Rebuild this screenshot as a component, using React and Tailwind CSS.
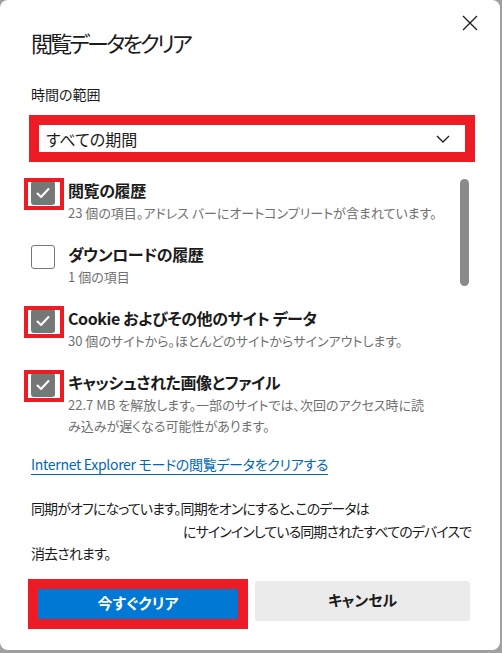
import React, { useState } from "react";

const items = [
  {
    label: "閲覧の履歴",
    sub: ["23 個の項目。アドレス バーにオートコンプリートが含まれています。"],
    checked: true,
  },
  { label: "ダウンロードの履歴", sub: ["1 個の項目"], checked: false },
  {
    label: "Cookie およびその他のサイト データ",
    sub: ["30 個のサイトから。ほとんどのサイトからサインアウトします。"],
    checked: true,
  },
  {
    label: "キャッシュされた画像とファイル",
    sub: [
      "22.7 MB を解放します。一部のサイトでは、次回のアクセス時に読",
      "み込みが遅くなる可能性があります。",
    ],
    checked: true,
  },
];

const CheckBox = ({ checked, marked }) => (
  <div className="relative mt-[3px] h-6 w-6 shrink-0">
    {checked ? (
      <div className="flex h-6 w-6 items-center justify-center rounded-[3px] bg-[#777777]">
        <svg width="16" height="16" viewBox="0 0 16 16" fill="none">
          <path d="M2.5 8.5l3.5 3.5 7.5-8" stroke="white" strokeWidth="2" strokeLinecap="round" strokeLinejoin="round" />
        </svg>
      </div>
    ) : (
      <div className="h-6 w-6 rounded-[3px] border border-[#777777] bg-white" />
    )}
    {/* red annotation frame */}
    {marked && (
      <div className="absolute -left-[7px] -top-[3px] h-[32px] w-[40px] border-4 border-[#ed1c24]" />
    )}
  </div>
);

export default function App() {
  const [rows] = useState(items);

  return (
    <div
      className="h-[653px] w-[502px] bg-[#a0a0a0] [font-feature-settings:'palt']"
      style={{ fontFamily: '"Noto Sans CJK JP", "Noto Sans", sans-serif' }}
    >
      <div className="flex h-[650px] w-[500px] flex-col rounded-lg bg-white pl-[31px] text-[#1b1b1b]">
        {/* Header */}
        <div className="flex items-start justify-between">
          <h1 className="mt-[27px] text-[22px] leading-[30px] font-normal tracking-[-2.8px]">閲覧データをクリア</h1>
          <button className="mr-[22px] mt-[15px]">
            <svg width="16" height="16" viewBox="0 0 16 16">
              <path d="M1 1l14 14M15 1L1 15" stroke="#1b1b1b" strokeWidth="1.3" />
            </svg>
          </button>
        </div>

        {/* Time range */}
        <div className="mt-[27px] text-[14px] leading-[20px]">時間の範囲</div>
        <div className="-ml-[2px] mt-[11px] w-[446px] border-[10px] border-[#ed1c24]">
          <div className="flex h-[27px] items-center justify-between bg-white pl-[7px] pr-[15px]">
            <span className="text-[16px] leading-[22px]">すべての期間</span>
            <svg width="14" height="8" viewBox="0 0 14 8" fill="none">
              <path d="M1 1l6 6 6-6" stroke="#1b1b1b" strokeWidth="1.3" />
            </svg>
          </div>
        </div>

        {/* Checklist */}
        <div className="relative mt-[16px] flex flex-col gap-[19px]">
          {rows.map((row, i) => (
            <div key={i} className="flex gap-[13px]">
              <CheckBox checked={row.checked} marked={row.checked} />
              <div className="flex flex-col">
                <div className="text-[16px] leading-[24px] font-bold tracking-[-0.4px]">{row.label}</div>
                <div className="text-[13px] leading-[21px] text-[#707070]">
                  {row.sub.map((s, j) => (
                    <div key={j} className="whitespace-nowrap">{s}</div>
                  ))}
                </div>
              </div>
            </div>
          ))}
          {/* scrollbar thumb */}
          <div className="absolute right-[31px] top-[1px] h-[107px] w-[9px] rounded-full bg-[#8a8a8a]" />
        </div>

        {/* IE mode link */}
        <a className="mt-[19px] self-start border-b border-[#0067b8] text-[14px] leading-[19px] tracking-[-0.3px] text-[#0067b8]">
          Internet Explorer モードの閲覧データをクリアする
        </a>

        {/* Sync note */}
        <div className="mt-[22px] text-[14px] leading-[22.5px] tracking-[-0.9px]">
          <div className="whitespace-nowrap">同期がオフになっています。同期をオンにすると、このデータは</div>
          <div className="whitespace-nowrap pl-[152px]">にサインインしている同期されたすべてのデバイスで</div>
          <div className="whitespace-nowrap">消去されます。</div>
        </div>

        {/* Buttons */}
        <div className="mt-[14px] flex items-start gap-[7px]">
          <div className="-ml-[3px] border-[10px] border-[#ed1c24]">
            <button className="flex h-[30px] w-[200px] items-center justify-center bg-[#0078d4] text-[15px] font-bold text-white">
              今すぐクリア
            </button>
          </div>
          <button className="mt-[2px] flex h-[40px] w-[215px] items-center justify-center rounded-[3px] bg-[#ebebeb] text-[15px] font-bold text-[#1b1b1b]">
            キャンセル
          </button>
        </div>
      </div>
    </div>
  );
}
